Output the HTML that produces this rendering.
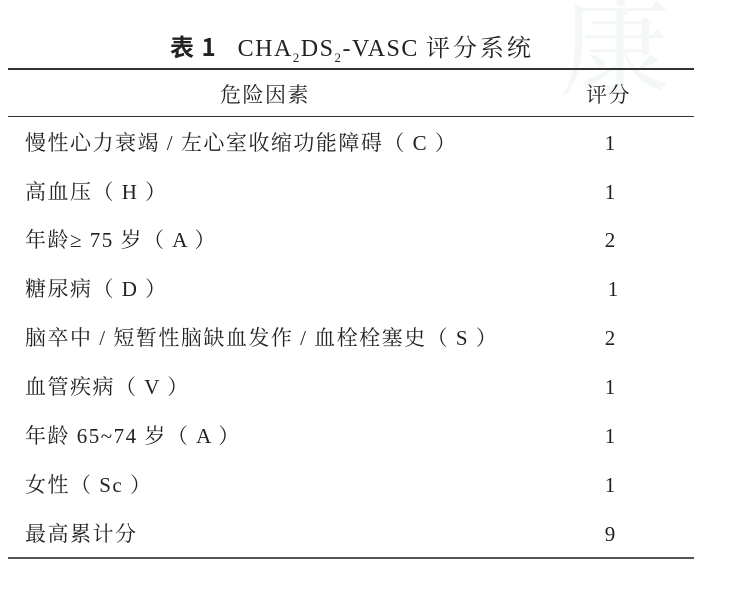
<!DOCTYPE html>
<html><head><meta charset="utf-8"><style>
body{margin:0;width:731px;height:602px;background:#fff;position:relative;overflow:hidden;font-family:"Liberation Serif","Noto Serif CJK SC",serif;color:#222}
.t{position:absolute;white-space:nowrap;font-size:21px;line-height:24px;letter-spacing:1.5px}
.l{position:absolute;left:8px;width:686px;background:#333}
.s{position:absolute;left:590px;width:40px;text-align:center;font-size:21px;line-height:24px}
.wm{position:absolute;color:#f4f7f7;font-size:110px;font-family:"Noto Serif CJK SC",serif}
</style></head><body>
<div class="wm" style="left:560px;top:-40px">康</div>
<div class="t" style="left:170px;top:32px;font-size:24px;line-height:28px;letter-spacing:1px"><b style="font-family:'Noto Sans CJK SC',sans-serif">表 1</b>&nbsp;&nbsp;&nbsp;<span style="letter-spacing:1.5px">CHA<sub style="font-size:13px">2</sub>DS<sub style="font-size:13px">2</sub>-VASC</span> <span style="letter-spacing:3px">评分系统</span></div>
<div class="l" style="top:68px;height:2px"></div>
<div class="t" style="left:220px;top:83px">危险因素</div>
<div class="t" style="left:586px;top:83px">评分</div>
<div class="l" style="top:116px;height:1px"></div>
<div class="t" style="left:25px;top:131px">慢性心力衰竭 / 左心室收缩功能障碍（ C ）</div><div class="s" style="top:131px">1</div>
<div class="t" style="left:25px;top:180px">高血压（ H ）</div><div class="s" style="top:180px">1</div>
<div class="t" style="left:25px;top:228px">年龄≥ 75 岁（ A ）</div><div class="s" style="top:228px">2</div>
<div class="t" style="left:25px;top:277px">糖尿病（ D ）</div><div class="s" style="top:277px;left:593px">1</div>
<div class="t" style="left:25px;top:326px">脑卒中 / 短暂性脑缺血发作 / 血栓栓塞史（ S ）</div><div class="s" style="top:326px">2</div>
<div class="t" style="left:25px;top:375px">血管疾病（ V ）</div><div class="s" style="top:375px">1</div>
<div class="t" style="left:25px;top:424px">年龄 65~74 岁（ A ）</div><div class="s" style="top:424px">1</div>
<div class="t" style="left:25px;top:473px">女性（ Sc ）</div><div class="s" style="top:473px">1</div>
<div class="t" style="left:25px;top:522px">最高累计分</div><div class="s" style="top:522px">9</div>
<div class="l" style="top:557px;height:2px;background:#555"></div>
</body></html>
